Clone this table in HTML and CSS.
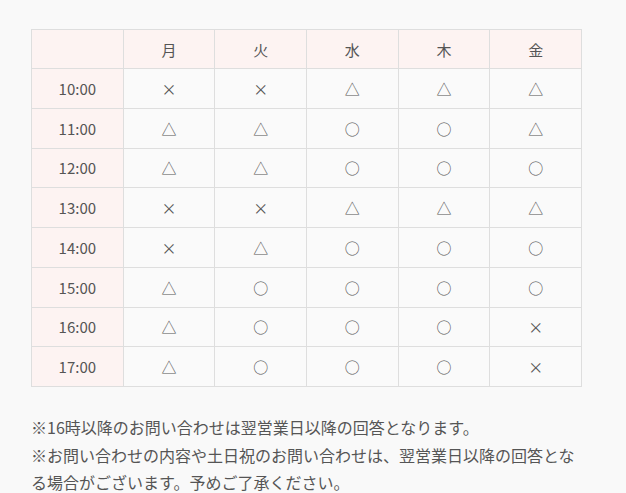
FILE: index.html
```html
<!DOCTYPE html>
<html lang="ja">
<head>
<meta charset="utf-8">
<link rel="stylesheet" href="styles.css">
</head>
<body>
<div class="wrap">
<table class="sched">
<thead>
<tr><th class="corner"></th><th>月</th><th>火</th><th>水</th><th>木</th><th>金</th></tr>
</thead>
<tbody>
<tr><th>10:00</th><td>×</td><td>×</td><td>△</td><td>△</td><td>△</td></tr>
<tr><th>11:00</th><td>△</td><td>△</td><td>○</td><td>○</td><td>△</td></tr>
<tr><th>12:00</th><td>△</td><td>△</td><td>○</td><td>○</td><td>○</td></tr>
<tr><th>13:00</th><td>×</td><td>×</td><td>△</td><td>△</td><td>△</td></tr>
<tr><th>14:00</th><td>×</td><td>△</td><td>○</td><td>○</td><td>○</td></tr>
<tr><th>15:00</th><td>△</td><td>○</td><td>○</td><td>○</td><td>○</td></tr>
<tr><th>16:00</th><td>△</td><td>○</td><td>○</td><td>○</td><td>×</td></tr>
<tr><th>17:00</th><td>△</td><td>○</td><td>○</td><td>○</td><td>×</td></tr>
</tbody>
</table>
<div class="notes">
<p>※16時以降のお問い合わせは翌営業日以降の回答となります。</p>
<p>※お問い合わせの内容や土日祝のお問い合わせは、翌営業日以降の回答となる場合がございます。予めご了承ください。</p>
</div>
</div>
</body>
</html>
```
FILE: styles.css
```css
html, body {
  margin: 0;
  padding: 0;
  background: #f9f9f9;
}
body {
  font-family: "Noto Sans CJK JP", "Noto Sans", sans-serif;
  color: #555;
}
.wrap {
  width: 551px;
  padding: 29px 0 0 31px;
}
.sched {
  width: 551px;
  border-collapse: collapse;
  table-layout: fixed;
  font-size: 15px;
}
.sched th, .sched td {
  border: 1px solid #dedede;
  text-align: center;
  vertical-align: middle;
  font-weight: 400;
  padding: 0;
  height: 38.75px;
}
.sched thead th {
  background: #fdf3f2;
  height: 38px;
}
.sched tbody th {
  background: #fdf3f2;
}
.sched td {
  background: #fafafa;
}
.notes {
  margin-top: 27px;
  font-size: 16px;
  line-height: 27.5px;
}
.notes p {
  margin: 0;
}
```
